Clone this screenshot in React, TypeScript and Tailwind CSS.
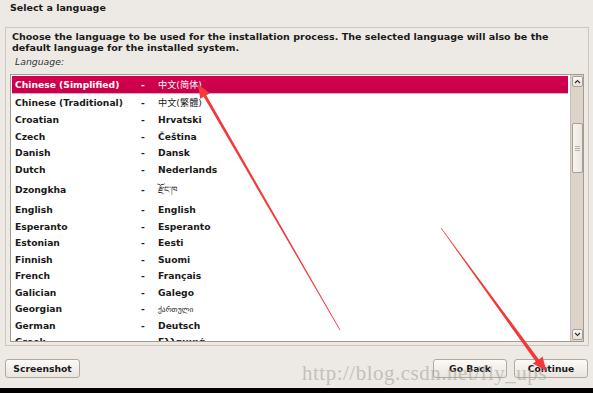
import React from "react";

type Row = { n: string; v: string; h?: number; alt?: boolean; sel?: boolean; small?: boolean };

const rows: Row[] = [
  { n: "Chinese (Simplified)", v: "中文(简体)", h: 18, alt: true, sel: true },
  { n: "Chinese (Traditional)", v: "中文(繁體)", h: 18, alt: true },
  { n: "Croatian", v: "Hrvatski" },
  { n: "Czech", v: "Čeština" },
  { n: "Danish", v: "Dansk" },
  { n: "Dutch", v: "Nederlands" },
  { n: "Dzongkha", v: "རྫོང་ཁ", h: 24, alt: true },
  { n: "English", v: "English" },
  { n: "Esperanto", v: "Esperanto" },
  { n: "Estonian", v: "Eesti" },
  { n: "Finnish", v: "Suomi" },
  { n: "French", v: "Français" },
  { n: "Galician", v: "Galego" },
  { n: "Georgian", v: "ქართული", alt: true, small: true },
  { n: "German", v: "Deutsch" },
  { n: "Greek", v: "Ελληνικά" },
];

const font = { fontFamily: '"DejaVu Sans", "Noto Sans CJK SC", sans-serif' };

function Btn({ label, w }: { label: string; w: string }) {
  return (
    <div
      className={`${w} h-[19px] flex items-center justify-center rounded-[3px] border border-[#b3a999] bg-gradient-to-b from-[#fbfaf9] to-[#e9e5df] text-[9.2px] font-bold text-[#1a1a1a]`}
    >
      {label}
    </div>
  );
}

export default function App() {
  return (
    <div
      className="relative w-[593px] h-[393px] overflow-hidden bg-[#edeae6] flex flex-col text-[#1a1a1a]"
      style={font}
    >
      {/* Title */}
      <div className="h-[27px] pl-[10px] pt-[2px] text-[9.5px] leading-[12px] font-bold">Select a language</div>

      {/* Panel */}
      <div className="ml-[5px] mr-[4px] h-[319px] border border-[#cfc7bc] flex flex-col px-[4px]">
        <div className="pl-[2px] pt-[3px] text-[9.55px] leading-[11px] font-bold">
          Choose the language to be used for the installation process. The selected language will also be the
          <br />
          default language for the installed system.
        </div>
        <div className="h-[21px] pl-[5px] pt-[3px] text-[9.3px] leading-[11px] italic text-[#333]">Language:</div>

        {/* List */}
        <div className="h-[268px] border border-[#a59b8e] bg-white flex overflow-hidden">
          <div className="flex-1 flex flex-col pt-[1px] pl-[1px] pr-[2px] overflow-hidden">
            {rows.map((r) => (
              <div
                key={r.n}
                className={`flex items-center shrink-0 text-[9.2px] font-bold ${
                  r.sel
                    ? "bg-gradient-to-b from-[#d6004f] to-[#c6004a] text-white border-b border-[#f3a0bf]"
                    : "text-[#1a1a1a]"
                }`}
                style={{ height: r.h ?? 16.5 }}
              >
                <div className="w-[129px] pl-[3px] whitespace-nowrap">{r.n}</div>
                <div className="w-[17px]">-</div>
                <div
                  className={`whitespace-nowrap ${r.alt ? "font-normal" : ""} ${r.small ? "text-[7.5px]" : ""}`}
                >
                  {r.v}
                </div>
              </div>
            ))}
          </div>
          {/* Scrollbar */}
          <div className="w-[13px] bg-[#dcd4c9] border-l border-[#c9bfb2] flex flex-col items-center py-[1px]">
            <div className="w-[11px] h-[11px] rounded-[2px] border border-[#a99f92] bg-gradient-to-b from-[#fbfaf8] to-[#e6e1da] flex items-center justify-center">
              <svg width="7" height="5" viewBox="0 0 7 5">
                <path d="M1 4 L3.5 1.5 L6 4" stroke="#333" strokeWidth="1.2" fill="none" />
              </svg>
            </div>
            <div className="mt-[36px] w-[11px] h-[50px] rounded-[2px] border border-[#a99f92] bg-gradient-to-r from-[#f7f4f1] to-[#ebe6e0] flex flex-col items-center justify-center gap-[1px]">
              <div className="w-[5px] h-[1px] bg-[#b9b0a4]" />
              <div className="w-[5px] h-[1px] bg-[#b9b0a4]" />
              <div className="w-[5px] h-[1px] bg-[#b9b0a4]" />
            </div>
            <div className="flex-1" />
            <div className="w-[11px] h-[11px] rounded-[2px] border border-[#a99f92] bg-gradient-to-b from-[#fbfaf8] to-[#e6e1da] flex items-center justify-center">
              <svg width="7" height="5" viewBox="0 0 7 5">
                <path d="M1 1 L3.5 3.5 L6 1" stroke="#333" strokeWidth="1.2" fill="none" />
              </svg>
            </div>
          </div>
        </div>
      </div>

      {/* Buttons */}
      <div className="mt-[13px] h-[19px] flex pl-[5px] pr-[5px]">
        <Btn label="Screenshot" w="w-[75px]" />
        <div className="flex-1" />
        <Btn label="Go Back" w="w-[74px]" />
        <div className="w-[7px]" />
        <Btn label="Continue" w="w-[74px]" />
      </div>
      <div className="flex-1" />
      <div className="h-[5px] bg-black" />

      {/* Watermark */}
      <div
        className="absolute left-[302px] top-[361px] text-[21px] leading-[24px] text-[#a9a5a0] opacity-60 tracking-[0.5px] whitespace-nowrap pointer-events-none"
        style={{ fontFamily: '"Liberation Serif", serif' }}
      >
        http://blog.csdn.net/fly_ups
      </div>

      {/* Red arrows */}
      <svg className="absolute inset-0 pointer-events-none" width="593" height="393" viewBox="0 0 593 393">
        <polygon
          points="340.3,329.8 206.3,95.35 209.8,93.3 198,84 200.3,98.9 203.7,96.85 339.7,330.2"
          fill="#f23a3a"
        />
        <polygon
          points="441.2,227.8 538.9,359.4 542.5,356.5 546.5,371 532.7,363.6 535.7,361.6 440.8,228.2"
          fill="#f23a3a"
        />
      </svg>
    </div>
  );
}
